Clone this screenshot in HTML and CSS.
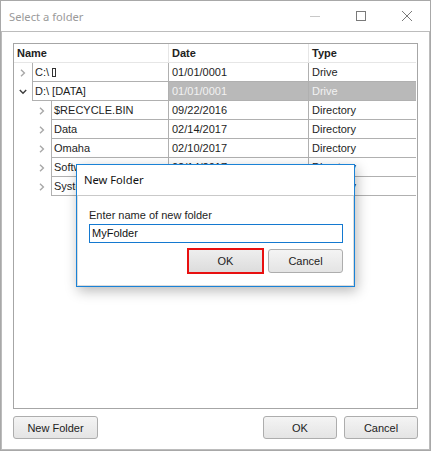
FILE: index.html
```html
<!DOCTYPE html>
<html>
<head>
<meta charset="utf-8">
<link rel="stylesheet" href="styles.css">
</head>
<body>
<div class="window">
  <div class="titlebar">
    <span class="title">Select a folder</span>
    <div class="caps">
      <span class="cap"><svg width="10" height="10" viewBox="0 0 10 10"><path d="M0 5.5 H10" stroke="#c8c8c8" stroke-width="1"/></svg></span>
      <span class="cap"><svg width="10" height="10" viewBox="0 0 10 10"><rect x="0.5" y="0.5" width="9" height="9" fill="none" stroke="#7a7a7a" stroke-width="1"/></svg></span>
      <span class="cap"><svg width="10" height="10" viewBox="0 0 10 10"><path d="M0 0 L10 10 M10 0 L0 10" stroke="#7a7a7a" stroke-width="1"/></svg></span>
    </div>
  </div>
  <div class="client">
    <div class="tree">
      <div class="row header">
        <div class="h-name">Name</div>
        <div class="h-date">Date</div>
        <div class="h-type">Type</div>
      </div>
      <div class="row">
        <div class="c-name"><span class="exp"><svg width="6" height="8" viewBox="0 0 6 8"><path d="M1 0.8 L4.4 4 L1 7.2" stroke="#a8a8a8" stroke-width="1.4" fill="none"/></svg></span><span class="label">C:\ <span class="tofu"></span></span></div>
        <div class="c-date">01/01/0001</div>
        <div class="c-type">Drive</div>
      </div>
      <div class="row sel">
        <div class="c-name"><span class="exp"><svg width="8" height="6" viewBox="0 0 8 6"><path d="M0.8 1 L4 4.3 L7.2 1" stroke="#3c3c3c" stroke-width="1.4" fill="none"/></svg></span><span class="label">D:\ [DATA]</span></div>
        <div class="c-date">01/01/0001</div>
        <div class="c-type">Drive</div>
      </div>
      <div class="row">
        <div class="c-name"><span class="indent"></span><span class="exp"><svg width="6" height="8" viewBox="0 0 6 8"><path d="M1 0.8 L4.4 4 L1 7.2" stroke="#a8a8a8" stroke-width="1.4" fill="none"/></svg></span><span class="label">$RECYCLE.BIN</span></div>
        <div class="c-date">09/22/2016</div>
        <div class="c-type">Directory</div>
      </div>
      <div class="row">
        <div class="c-name"><span class="indent"></span><span class="exp"><svg width="6" height="8" viewBox="0 0 6 8"><path d="M1 0.8 L4.4 4 L1 7.2" stroke="#a8a8a8" stroke-width="1.4" fill="none"/></svg></span><span class="label">Data</span></div>
        <div class="c-date">02/14/2017</div>
        <div class="c-type">Directory</div>
      </div>
      <div class="row">
        <div class="c-name"><span class="indent"></span><span class="exp"><svg width="6" height="8" viewBox="0 0 6 8"><path d="M1 0.8 L4.4 4 L1 7.2" stroke="#a8a8a8" stroke-width="1.4" fill="none"/></svg></span><span class="label">Omaha</span></div>
        <div class="c-date">02/10/2017</div>
        <div class="c-type">Directory</div>
      </div>
      <div class="row">
        <div class="c-name"><span class="indent"></span><span class="exp"><svg width="6" height="8" viewBox="0 0 6 8"><path d="M1 0.8 L4.4 4 L1 7.2" stroke="#a8a8a8" stroke-width="1.4" fill="none"/></svg></span><span class="label">Software</span></div>
        <div class="c-date">02/14/2017</div>
        <div class="c-type">Directory</div>
      </div>
      <div class="row">
        <div class="c-name"><span class="indent"></span><span class="exp"><svg width="6" height="8" viewBox="0 0 6 8"><path d="M1 0.8 L4.4 4 L1 7.2" stroke="#a8a8a8" stroke-width="1.4" fill="none"/></svg></span><span class="label">System</span></div>
        <div class="c-date">09/22/2016</div>
        <div class="c-type">Directory</div>
      </div>
    </div>
    <div class="footer">
      <button class="btn btn-new">New Folder</button>
      <span class="spacer"></span>
      <button class="btn btn-std">OK</button>
      <button class="btn btn-std">Cancel</button>
    </div>
  </div>

  <div class="dialog">
    <div class="dlg-title">New Folder</div>
    <div class="dlg-body">
      <div class="dlg-label">Enter name of new folder</div>
      <div class="dlg-input">MyFolder</div>
      <div class="dlg-buttons">
        <button class="btn btn-ok">OK</button>
        <button class="btn btn-cancel">Cancel</button>
      </div>
    </div>
  </div>
</div>
</body>
</html>
```

FILE: styles.css
```css
* { box-sizing: border-box; }
html, body { margin: 0; padding: 0; background: #ffffff; }
body {
  font-family: "Liberation Sans", Arial, sans-serif;
  font-size: 11px;
  color: #1e1e1e;
}
.window {
  position: relative;
  width: 431px;
  height: 451px;
  border: 1px solid #a8a8a8;
  background: #ffffff;
  display: flex;
  flex-direction: column;
}
.titlebar {
  height: 30px;
  flex: none;
  display: flex;
  align-items: center;
  padding-left: 8px;
}
.title {
  font-family: "Noto Sans", sans-serif;
  font-size: 11.2px;
  color: #9a9a9a;
  flex: 1;
  padding-top: 1px;
}
.caps { display: flex; height: 30px; }
.cap {
  width: 46px;
  height: 30px;
  display: flex;
  align-items: center;
  justify-content: center;
}
.cap svg { display: block; }
.client {
  flex: 1;
  border: 1px solid #bcbcbc;
  padding: 11px 11px 10px 11px;
  display: flex;
  flex-direction: column;
}
.tree {
  height: 366px;
  border: 1px solid #a6a6a6;
  background: #fff;
}
.row {
  display: flex;
  height: 19px;
  line-height: 18px;
}
.header { font-weight: bold; color: #222; }
.header > div { border-bottom: 1px solid #e6e6e6; padding-left: 3px; }
.h-name { width: 154px; }
.h-date { width: 140px; border-left: 1px solid #e6e6e6; }
.h-type { width: 108px; border-left: 1px solid #e6e6e6; }
.c-name { width: 154px; display: flex; }
.indent { width: 19px; flex: none; }
.exp {
  width: 18px;
  flex: none;
  display: flex;
  align-items: center;
  justify-content: center;
  padding-top: 1px;
}
.exp svg { display: block; }
.label {
  flex: 1;
  border-left: 1px solid #b0b0b0;
  border-bottom: 1px solid #b0b0b0;
  padding-left: 2px;
  white-space: nowrap;
  overflow: hidden;
}
.tofu {
  display: inline-block;
  width: 4px;
  height: 9px;
  border: 1px solid #333;
  vertical-align: -1px;
}
.c-date, .c-type {
  border-left: 1px solid #b0b0b0;
  border-bottom: 1px solid #b0b0b0;
  padding-left: 3px;
  white-space: nowrap;
}
.c-date { width: 140px; }
.c-type { width: 108px; }
.sel .c-date, .sel .c-type {
  background: #b9b9b9;
  color: #f2f2f2;
}
.footer {
  display: flex;
  margin-top: 7px;
  gap: 7px;
}
.spacer { flex: 1; }
.btn {
  font-family: "Liberation Sans", Arial, sans-serif;
  font-size: 11px;
  color: #222;
  height: 23px;
  border: 1px solid #adadad;
  border-radius: 3px;
  background: linear-gradient(#f4f4f4, #e4e4e4);
  padding: 0;
  margin: 0;
}
.btn-new { width: 85px; }
.btn-std { width: 74px; }

.dialog {
  position: absolute;
  left: 75px;
  top: 163px;
  width: 279px;
  height: 123px;
  border: 1px solid #1a82d6;
  background: #fff;
  box-shadow: 2px 4px 12px rgba(0,0,0,0.28);
  display: flex;
  flex-direction: column;
}
.dlg-title {
  height: 30px;
  flex: none;
  font-family: "Noto Sans", sans-serif;
  font-size: 11.2px;
  color: #111;
  padding-left: 7px;
  line-height: 30px;
}
.dlg-body {
  flex: 1;
  border-top: 1px solid #c9c9c9;
  border-left: 1px solid #dcdcdc;
  border-right: 1px solid #dcdcdc;
  border-bottom: 1px solid #dcdcdc;
  padding: 11px 10px 0 11px;
}
.dlg-label { line-height: 16px; color: #1e1e1e; }
.dlg-input {
  margin-top: 1px;
  height: 19px;
  border: 1px solid #1479d0;
  padding-left: 2px;
  line-height: 17px;
  color: #111;
}
.dlg-buttons {
  display: flex;
  justify-content: flex-end;
  margin-top: 5px;
  gap: 4px;
  align-items: flex-start;
}
.btn-ok {
  width: 77px;
  height: 26px;
  border: 2px solid #e81010;
  border-radius: 0;
  background: linear-gradient(#eeeeee, #dcdcdc);
}
.btn-cancel {
  width: 75px;
  height: 24px;
  margin-top: 1px;
}
```
